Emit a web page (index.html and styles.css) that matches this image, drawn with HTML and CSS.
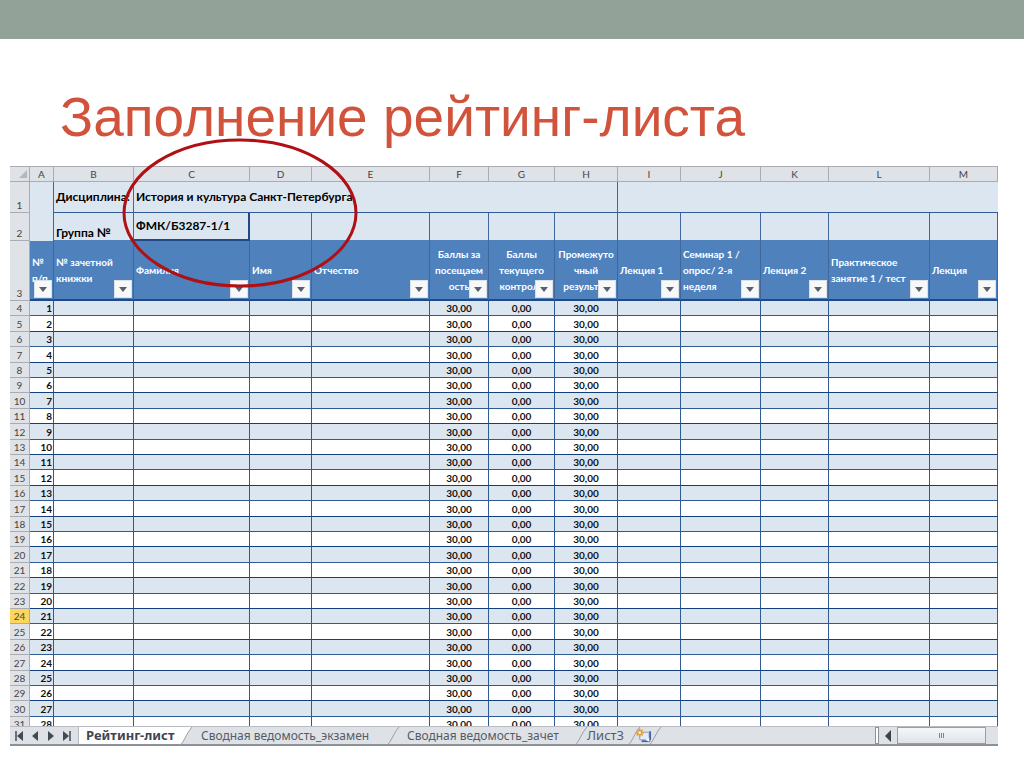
FILE: index.html
```
<!DOCTYPE html>
<html lang="ru">
<head>
<meta charset="utf-8">
<title>Заполнение рейтинг-листа</title>
<link rel="stylesheet" href="styles.css">
</head>
<body>
<div class="slide">
  <div class="band"></div>
  <h1 class="title">Заполнение рейтинг-листа</h1>
  <main class="book">
    <div class="grid">
      <table class="sheet">
        <colgroup>
          <col class="w-n"><col class="w-a"><col class="w-b"><col class="w-c"><col class="w-d"><col class="w-e"><col class="w-f"><col class="w-g"><col class="w-h"><col class="w-i"><col class="w-j"><col class="w-k"><col class="w-l"><col class="w-m">
        </colgroup>
        <thead>
          <tr class="letters"><th class="corner"><svg viewBox="0 0 10 10" width="10" height="10"><path d="M9 1V9H1Z" fill="#b4b8bd"/></svg></th><th>A</th><th>B</th><th>C</th><th>D</th><th>E</th><th>F</th><th>G</th><th>H</th><th>I</th><th>J</th><th>K</th><th>L</th><th>M</th></tr>
          <tr class="r1"><th class="num">1</th><td rowspan="2" class="plain"></td><td class="label">Дисциплина:</td><td colspan="6" class="label">История и культура Санкт-Петербурга</td><td colspan="5" class="last"></td></tr>
          <tr class="r2"><th class="num">2</th><td class="label low">Группа №</td><td class="label group">ФМК/Б3287-1/1</td><td></td><td></td><td></td><td></td><td></td><td></td><td></td><td></td><td></td><td></td></tr>
          <tr class="r3" id="heads"><th class="num">3</th></tr>
        </thead>
        <tbody id="rows"></tbody>
      </table>
    </div>
    <footer class="tabs">
      <nav class="steps">
        <button aria-label="Первый лист"><svg viewBox="0 0 10 10"><path d="M2 0V10" stroke="#434a55" stroke-width="1.5"/><path d="M9 0V10L3 5Z" fill="#434a55"/></svg></button>
        <button aria-label="Предыдущий лист"><svg viewBox="0 0 10 10"><path d="M8 0V10L2 5Z" fill="#434a55"/></svg></button>
        <button aria-label="Следующий лист"><svg viewBox="0 0 10 10"><path d="M2 0V10L8 5Z" fill="#434a55"/></svg></button>
        <button aria-label="Последний лист"><svg viewBox="0 0 10 10"><path d="M8 0V10" stroke="#434a55" stroke-width="1.5"/><path d="M1 0V10L7 5Z" fill="#434a55"/></svg></button>
      </nav>
      <button class="tab active">Рейтинг-лист</button>
      <svg class="slant" viewBox="0 0 12 17"><path d="M0 0H12Q9 3 5 11T0 17Z" fill="#fff"/><path d="M12 0Q9 3 5 11T0 17" fill="none" stroke="#9a9fa6"/></svg>
      <button class="tab second">Сводная ведомость_экзамен</button>
      <svg class="slant" viewBox="0 0 12 17"><path d="M12 0Q9 3 5 11T0 17" fill="none" stroke="#9a9fa6"/></svg>
      <button class="tab third">Сводная ведомость_зачет</button>
      <svg class="slant" viewBox="0 0 12 17"><path d="M12 0Q9 3 5 11T0 17" fill="none" stroke="#9a9fa6"/></svg>
      <button class="tab fourth">Лист3</button>
      <svg class="slant" viewBox="0 0 12 17"><path d="M12 0Q9 3 5 11T0 17" fill="none" stroke="#9a9fa6"/></svg>
      <button class="add" aria-label="Вставить лист"><svg viewBox="0 0 18 16"><path d="M5 4H15V12H5Z" fill="#e4eaf7" stroke="#8d9cc4"/><path d="M16 3V12.500" stroke="#4b64a3" stroke-width="2"/><path d="M7 13.500H16" stroke="#4b64a3" stroke-width="2"/><path d="M11 12l4-2v4z" fill="#fff"/><path d="M5 0V9M0.500 4.500H9.500M2 1.500L8 7.500M8 1.500L2 7.500" stroke="#dd9c35" stroke-width="1.500"/><circle cx="5" cy="4.500" r="2" fill="#fff4d0" stroke="#d9922b"/></svg></button>
      <svg class="slant" viewBox="0 0 12 17"><path d="M12 0Q9 3 5 11T0 17" fill="none" stroke="#9a9fa6"/></svg>
      <div class="scroll">
        <span class="split"></span>
        <button class="left" aria-label="Прокрутить влево"><svg viewBox="0 0 8 12"><path d="M7 0V12L1 6Z" fill="#3c424b"/></svg></button>
        <span class="thumb"><i></i><i></i><i></i></span>
      </div>
    </footer>
    <svg class="ring" viewBox="0 0 236 150"><ellipse cx="118" cy="75" rx="116" ry="73" fill="none" stroke="#b00f14" stroke-width="3"/></svg>
  </main>
</div>
<script src="sheet.js"></script>
</body>
</html>
```
FILE: sheet.js
```
const heads = [
  ["№ п/п"], ["№ зачетной книжки"], ["Фамилия"], ["Имя"], ["Отчество"],
  ["Баллы за<br>посещаем<br>ость", "mid"], ["Баллы<br>текущего<br>контроля", "mid"],
  ["Промежуто<br>чный<br>результат", "mid"], ["Лекция 1"],
  ["Семинар 1 /<br>опрос/ 2-я<br>неделя"], ["Лекция 2"],
  ["Практическое<br>занятие 1 / тест"], ["Лекция"]
];
document.getElementById("heads").insertAdjacentHTML("beforeend", heads.map(([text, kind]) =>
  `<th class="head ${kind || ""}"><div class="clip">${text}</div><button class="filter" aria-label="Фильтр"><svg viewBox="0 0 8 5"><path d="M0 0H8L4 5Z" fill="#5a6069"/></svg></button></th>`).join(""));

let html = "";
for (let n = 1; n <= 28; n++) {
  const values = ["", "", "", "", "30,00", "0,00", "30,00", "", "", "", "", ""];
  html += `<tr><th class="num${n === 21 ? " current" : ""}">${n + 3}</th><td class="index">${n}</td>` +
    values.map(v => `<td>${v}</td>`).join("") + "</tr>";
}
document.getElementById("rows").innerHTML = html;
```
FILE: styles.css
```
* { box-sizing: border-box; }
body { margin: 0; background: #fff; font-family: Lato, "Noto Sans", sans-serif; }
button { border: 0; padding: 0; margin: 0; background: none; font: inherit; color: inherit; }
svg { display: block; }

.slide { display: flex; flex-direction: column; height: 100vh; padding-bottom: 21px; }
.band { flex: none; height: 39px; background: #93a299; }
.title { flex: none; margin: 0; height: 127px; padding: 45px 0 0 60px; font: 400 55px/66px "Liberation Sans", Arial, sans-serif; color: #d2533c; white-space: nowrap; }

.book { position: relative; flex: 1; min-height: 0; display: flex; flex-direction: column; margin: 0 26px 0 10px; }
.grid { flex: 1; min-height: 0; overflow: hidden; }
.ring { position: absolute; left: 112px; top: -28px; width: 236px; height: 150px; }

.sheet { width: 100%; table-layout: fixed; border-collapse: separate; border-spacing: 0; font-size: 10px; line-height: 14px; color: #111; }
.w-n { width: 20px; } .w-a { width: 24px; } .w-b { width: 80px; } .w-c { width: 116px; }
.w-d { width: 62px; } .w-e { width: 118px; } .w-f { width: 59px; } .w-g { width: 66px; }
.w-h { width: 63px; } .w-i { width: 63px; } .w-j { width: 80px; } .w-k { width: 68px; }
.w-l { width: 101px; } .w-m { width: 68px; }
.sheet th, .sheet td { padding: 0; border-right: 1px solid #3e679c; border-bottom: 1px solid #2f5a92; overflow: hidden; }
.letters { height: 16px; }
.sheet .letters th { background: #dfe2e6; color: #444; font-weight: 400; border-color: #a9adb3; border-top: 1px solid #a9adb3; }
.corner svg { margin-left: 8px; }
.sheet .num { background: #dfe2e6; color: #444; font-weight: 400; border-color: #a9adb3; vertical-align: bottom; }
.sheet .current { background: #ffd65c; border-color: #d8a83a; }

.r1 td, .r2 td { background: #dce6f0; }
.r1 { height: 31px; }
.r2 { height: 28px; }
.sheet .plain { border-bottom: 0; }
.sheet .r1 .last { border-right: 0; }
.sheet .r2 td { border-bottom-color: #4f81bd; }
.sheet .label { padding: 0 2px; font-size: 12px; font-weight: 700; color: #000; white-space: nowrap; }
.sheet .low { vertical-align: bottom; }
.sheet .r2 .group { border-right: 2px solid #1f4a85; border-bottom: 2px solid #1f4a85; }

.r3 { height: 60px; }
.sheet .head { position: relative; background: #4f81bd; color: #fff; border-bottom: 2px solid #1f4a85; text-align: left; font-size: 10px; line-height: 16px; }
.clip { max-height: 48px; padding-left: 2px; overflow: hidden; }
.mid .clip { padding: 0; text-align: center; white-space: nowrap; }
.filter { position: absolute; right: 1px; bottom: 1px; display: grid; place-items: center; width: 18px; height: 18px; background: #f7f8fa; border: 1px solid #dde1e6; }
.filter svg { width: 8px; height: 5px; }

#rows tr { height: 15px; }
#rows tr:nth-child(5n+2), #rows tr:nth-child(5n+4) { height: 16px; }
#rows td, #rows th { line-height: 14px; }
#rows td { text-align: center; border-right-color: #2f5a92; font-weight: 700; font-size: 10px; }
#rows .index { text-align: right; padding-right: 1px; }
#rows tr:nth-child(odd) td { background: #dce6f0; }
#rows tr:nth-child(even) td { border-bottom-color: #123f7c; }

.tabs { flex: none; display: flex; height: 20px; background: #dee2e7; border-top: 1px solid #b8bcc2; border-bottom: 2px solid #8c9097; font: 13px/17px "Noto Sans", sans-serif; color: #555b66; white-space: nowrap; }
.steps { display: flex; width: 69px; padding-left: 4px; gap: 6px; align-items: center; border-right: 1px solid #b8bcc2; }
.steps svg { width: 10px; height: 10px; }
.slant { flex: none; width: 12px; height: 17px; overflow: visible; }
.tab { flex: none; text-align: left; }
.active { width: 101px; padding-left: 7px; background: #fff; font-weight: 700; color: #3f4550; }
.second { width: 195px; padding-left: 9px; font-size: 12px; }
.third { width: 176px; padding-left: 8px; font-size: 12px; }
.fourth { width: 41px; }
.add { width: 17px; margin: 0 -3px 0 -5px; }
.add svg { width: 17px; height: 16px; }
.scroll { display: flex; margin-left: auto; padding-right: 12px; gap: 5px; }
.split { width: 4px; background: #fff; border: 1px solid #8c9097; }
.left svg { width: 8px; height: 12px; }
.thumb { display: flex; align-items: center; justify-content: center; gap: 1px; width: 89px; background: linear-gradient(#f5f7f9, #dfe3e8); border: 1px solid #9a9fa6; }
.thumb i { width: 1px; height: 5px; background: #80858c; }
```
